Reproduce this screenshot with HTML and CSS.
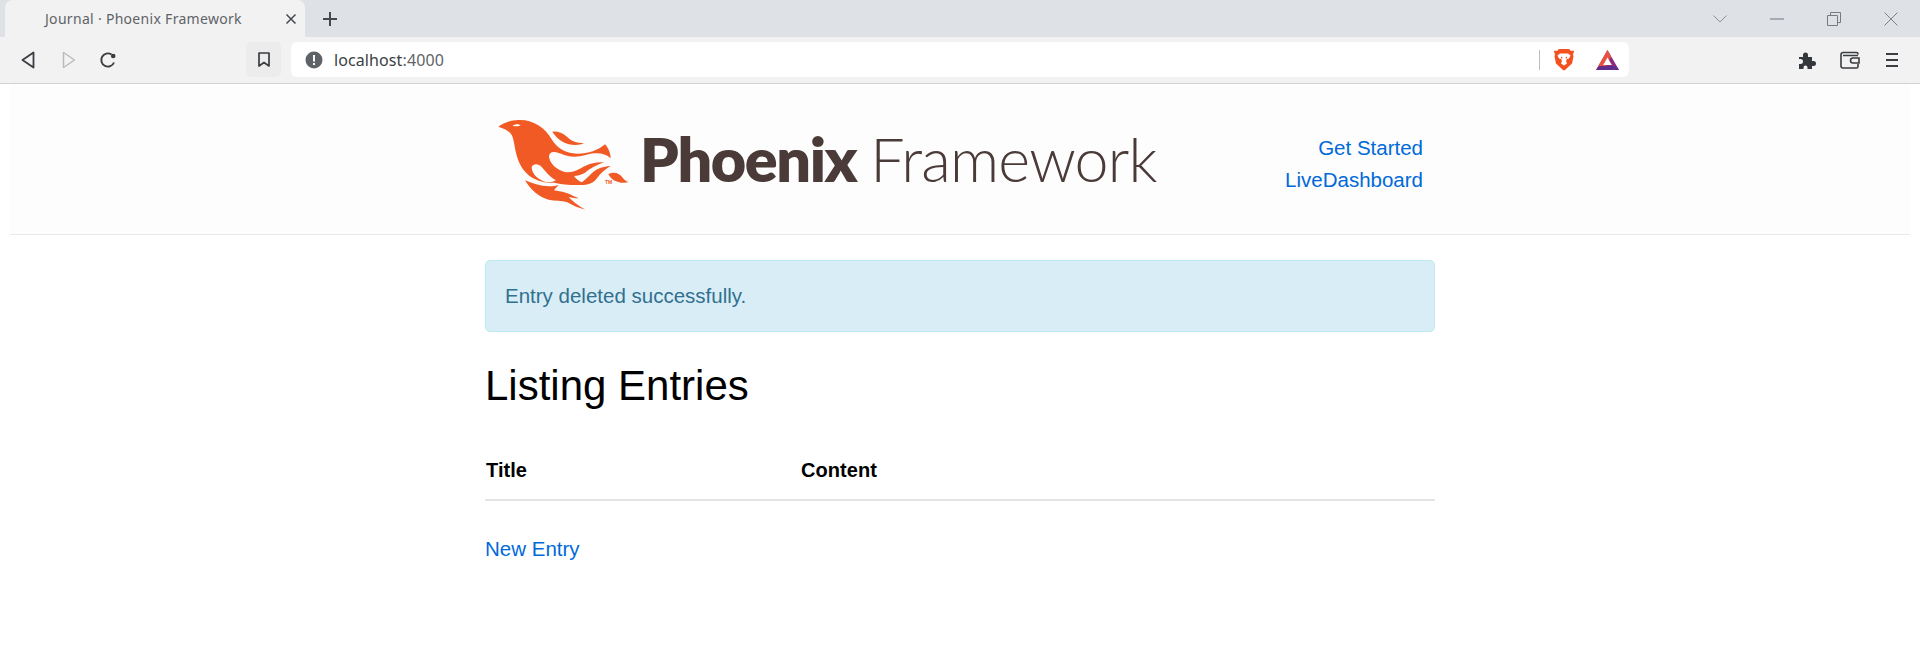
FILE: index.html
```html
<!DOCTYPE html>
<html lang="en">
<head>
<meta charset="utf-8">
<title>Journal · Phoenix Framework</title>
<link rel="stylesheet" href="styles.css">
</head>
<body>
<div class="browser">
  <div class="tabstrip">
    <div class="tab">
      <span class="tab-title">Journal · Phoenix Framework</span>
      <svg class="tab-close" width="12" height="12" viewBox="0 0 12 12"><path d="M1.500 1.500l9 9M10.500 1.500l-9 9" stroke="#45494e" stroke-width="1.500" fill="none"/></svg>
    </div>
    <svg class="new-tab" width="16" height="16" viewBox="0 0 16 16"><path d="M8 1v14M1 8h14" stroke="#45494e" stroke-width="2" fill="none"/></svg>
    <div class="win-controls">
      <svg width="14" height="8" viewBox="0 0 14 8"><path d="M.5.5L7 7 13.500.5" stroke="#8f9296" stroke-width="1" fill="none"/></svg>
      <svg width="14" height="2" viewBox="0 0 14 2"><path d="M0 1h14" stroke="#70757a" stroke-width="1"/></svg>
      <svg width="14" height="14" viewBox="0 0 14 14"><path d="M.5 3.500h10v10H.5zM3.500 3.500V.5h10v10h-3" stroke="#777b80" stroke-width="1" fill="none"/></svg>
      <svg width="14" height="14" viewBox="0 0 14 14"><path d="M.5.5l13 13M13.500.5l-13 13" stroke="#7d8185" stroke-width="1" fill="none"/></svg>
    </div>
  </div>
  <div class="toolbar">
    <svg class="tool-back" width="14" height="18" viewBox="0 0 14 18"><path d="M12.500 1.500v15L1.500 9z" stroke="#3a3d41" stroke-width="1.800" fill="none" stroke-linejoin="round"/></svg>
    <svg class="tool-fwd" width="14" height="18" viewBox="0 0 14 18"><path d="M1.500 1.500v15L12.500 9z" stroke="#b9bbbd" stroke-width="1.500" fill="none" stroke-linejoin="round"/></svg>
    <svg class="tool-reload" width="18" height="18" viewBox="0 0 18 18"><path d="M15 11.500A6.600 6.600 0 1 1 12.500 3.500" stroke="#3a3d41" stroke-width="1.900" fill="none"/><circle cx="14.200" cy="5" r="2.300" fill="#3a3d41"/></svg>
    <div class="bookmark"><svg width="12" height="15" viewBox="0 0 12 15"><path d="M1 1h10v13L6 10.500 1 14z" stroke="#3a3d41" stroke-width="1.700" fill="none" stroke-linejoin="round"/></svg></div>
    <div class="omnibox">
      <svg class="info" width="18" height="18" viewBox="0 0 18 18"><circle cx="9" cy="9" r="8.500" fill="#5f6368"/><rect x="8" y="4" width="2" height="6.500" fill="#fff"/><rect x="8" y="12" width="2" height="2" fill="#fff"/></svg>
      <span class="url"><span class="url-host">localhost</span>:4000</span>
      <span class="omni-sep"></span>
      <svg class="brave" width="20" height="23" viewBox="0 0 20 23"><path d="M5 1h10l2 2 2.500-.5.500 1-1 3 .5 2-1.500 7-7 6.500-1 .5-1-.5-7-6.500L.5 8.500l.5-2-1-3 .5-1L3 3z" fill="#f4511e"/><path d="M6 5.500h8l2.500 2-1.500 3-2 .5-1 2 1 2.500-3 2-3-2 1-2.500-1-2-2-.5-1.500-3z" fill="#fff"/><path d="M7 8.500l2 1.500-2 .5zM13 8.500l-2 1.500 2 .5z" fill="#f4511e"/></svg>
      <svg class="bat" width="23" height="20" viewBox="0 0 23 20"><path d="M11.500 0L23 20H0z" fill="#8c2a78"/><path d="M11.500 0L0 20h8l3.500-7L15 7z" fill="#f2543a" opacity=".9"/><path d="M0 20l3-4h17l3 4z" fill="#5f2d8c"/><path d="M11.500 7.500l4.300 7.500H7.200z" fill="#fff"/></svg>
    </div>
    <svg class="puzzle" width="18" height="18" viewBox="0 0 18 18"><path d="M1 6h4V4a2.500 2.500 0 0 1 5 0v2h4v4h1.500a2.500 2.500 0 0 1 0 5H14v3H9.500v-1.500a2 2 0 0 0-4 0V18H1v-5h1.500a2.500 2.500 0 0 0 0-5H1z" fill="#34373b"/></svg>
    <svg class="wallet" width="20" height="18" viewBox="0 0 20 18"><path d="M18 3.500V3a1.500 1.500 0 0 0-1.500-1.500H3A2 2 0 0 0 1 3.500V15a2 2 0 0 0 2 2h13.500a1.500 1.500 0 0 0 1.500-1.500V13" stroke="#3a3d41" stroke-width="1.600" fill="none"/><path d="M19 7h-6a2 2 0 0 0 0 5h6z" stroke="#3a3d41" stroke-width="1.600" fill="none"/><path d="M3 4.500h15" stroke="#3a3d41" stroke-width="1.500"/></svg>
    <svg class="menu" width="14" height="16" viewBox="0 0 14 16"><path d="M1 2h12M1 8h12M1 14h12" stroke="#3a3d41" stroke-width="1.800"/></svg>
  </div>
</div>

<div class="page">
  <header class="site-header">
    <div class="header-inner">
      <a class="logo" href="#">
        <svg class="logo-mark" width="150" height="105" viewBox="0 0 450 315">
          <path fill="#f15a24" d="M25 47C40 36 60 28 85 27C130 25 165 50 185 85C200 110 225 128 262 128C295 128 325 118 345 100C358 115 362 130 362 142C345 125 318 124 290 131C268 137 245 140 225 133C212 128 200 123 192 123C180 123 175 132 178 142C182 160 200 176 222 182C245 188 265 176 285 165C305 155 325 152 342 154C318 163 300 172 284 186C272 192 262 195 252 195C258 204 266 210 276 214C290 204 305 184 322 175C336 168 348 166 362 165C344 176 330 188 322 200C310 218 288 224 262 222C235 222 212 220 192 215C165 218 135 208 115 192C85 165 78 130 72 95C68 70 60 58 25 47Z"/>
          <path fill="#f15a24" d="M187 62C205 60 222 68 236 82C248 92 262 96 282 97C262 106 232 102 214 90C202 82 194 72 187 62Z"/>
          <path fill="#f15a24" d="M355 190C372 180 390 188 398 200C403 207 409 211 416 213C402 217 388 215 374 209C366 205 360 198 355 190Z"/>
          <path fill="#f15a24" d="M105 208C125 216 150 226 178 226C190 226 198 224 206 222C200 228 196 233 192 238C208 240 228 244 240 250C250 255 258 258 266 262C256 262 246 260 236 258C246 270 264 284 286 296C268 292 248 284 232 274C215 268 195 270 176 266C148 260 122 236 105 208Z"/>
          <path fill="#fff" d="M125 168C130 157 145 157 155 168C165 180 180 198 198 208C188 214 176 215 165 212C145 206 125 190 125 168Z"/>
          <path fill="#fff" d="M68 44C74 40 84 38 92 42C88 46 76 47 68 44Z"/>
          <text class="logo-tm" x="345" y="220">TM</text>
        </svg>
        <span class="logo-text"><b class="logo-bold">Phoenix</b> <span class="logo-light">Framework</span></span>
      </a>
      <nav class="site-nav">
        <a href="#">Get Started</a>
        <a href="#">LiveDashboard</a>
      </nav>
    </div>
  </header>
  <main class="content">
    <p class="alert">Entry deleted successfully.</p>
    <h1 class="title">Listing Entries</h1>
    <table class="entries">
      <thead><tr><th class="col-title">Title</th><th>Content</th></tr></thead>
    </table>
    <a class="new-entry" href="#">New Entry</a>
  </main>
</div>
</body>
</html>
```

FILE: styles.css
```css
* { box-sizing: border-box; }
html, body { margin: 0; padding: 0; background: #fff; }
body { font-family: "Liberation Sans", Arial, sans-serif; height: 667px; overflow: hidden; }
a { color: #0069d9; text-decoration: none; }
svg { display: block; flex: none; }

.tabstrip { height: 37px; background: #dee1e6; display: flex; align-items: center; }
.tab { width: 300px; height: 37px; margin-left: 5px; background: #f2f2f2; border-radius: 8px 8px 0 0; display: flex; align-items: center; padding: 0 8px 0 40px; justify-content: space-between; }
.tab-title { font: 14px "Noto Sans", "Open Sans", sans-serif; color: #5f6368; white-space: nowrap; letter-spacing: .3px; }
.new-tab { margin-left: 17px; }
.win-controls { margin-left: auto; display: flex; align-items: center; gap: 43px; padding-right: 22px; }

.toolbar { height: 47px; background: #f2f2f2; border-bottom: 1px solid #d2d2d2; display: flex; align-items: center; padding-bottom: 1px; }
.tool-back { margin-left: 21px; }
.tool-fwd { margin-left: 27px; }
.tool-reload { margin-left: 23px; }
.bookmark { margin-left: 129px; width: 35px; height: 35px; border-radius: 5px; background: #ececec; display: flex; align-items: center; justify-content: center; }
.omnibox { margin-left: 10px; width: 1338px; height: 35px; background: #fff; border-radius: 6px; display: flex; align-items: center; padding-left: 14px; }
.url { margin-left: 11px; font: 16px "Noto Sans", "Open Sans", sans-serif; color: #5f6368; letter-spacing: .1px; }
.url-host { color: #3c4043; }
.omni-sep { margin-left: auto; width: 1px; height: 20px; background: #bdbdbd; }
.brave { margin-left: 14px; }
.bat { margin-left: 22px; margin-right: 10px; }
.puzzle { margin-left: 169px; }
.wallet { margin-left: 24px; }
.menu { margin-left: 25px; }

.page { padding: 0 10px; }
.site-header { height: 151px; background: #fdfdfd; border-bottom: 1px solid #eaeaea; }
.header-inner { width: 950px; margin-left: 475px; height: 150px; display: flex; align-items: center; }
.logo { display: flex; align-items: center; color: #4a3a38; margin-left: 5px; height: 105px; margin-top: 8px; }
.logo-text { margin-left: 0; font-size: 61px; line-height: 1; white-space: nowrap; margin-top: -6px; }
.logo-bold { font-weight: 800; font-family: Lato, sans-serif; letter-spacing: -1.400px; }
.logo-light { font-weight: 300; font-family: Lato, sans-serif; letter-spacing: -.800px; margin-left: -3px; }
.logo-tm { font: 700 15px "Liberation Sans", sans-serif; fill: #f15a24; }
.site-nav { margin-left: auto; display: flex; flex-direction: column; align-items: flex-end; font-size: 20.500px; line-height: 32px; padding-right: 12px; padding-top: 10px; }

.content { width: 950px; margin-left: 475px; padding-top: 25px; }
.alert { margin: 0; height: 72px; padding: 0 19px; background: #d9edf7; border: 1px solid #bce8f1; border-radius: 5px; color: #31708f; font-size: 20.500px; line-height: 70px; }
.title { margin: 23px 0 0; font-size: 42px; font-weight: 400; line-height: 62px; color: #000; }
.entries { width: 100%; border-collapse: collapse; margin-top: 24px; }
.entries th { text-align: left; font-size: 20px; font-weight: 700; color: #000; height: 59px; padding: 0 1px; border-bottom: 2px solid #e4e4e4; letter-spacing: .05px; }
.col-title { width: 315px; }
.new-entry { display: block; margin-top: 34px; font-size: 20.500px; line-height: 28px; }
```
